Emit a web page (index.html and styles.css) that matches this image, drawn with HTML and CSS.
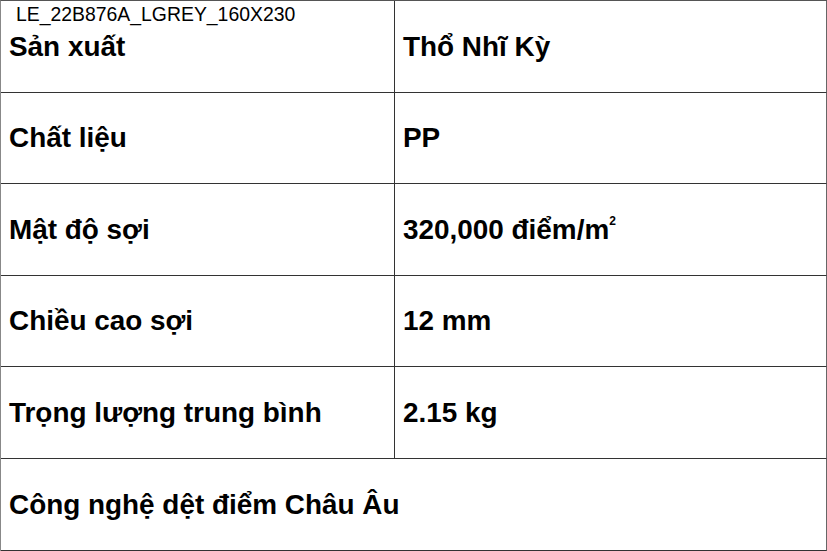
FILE: index.html
```html
<!DOCTYPE html>
<html lang="vi">
<head>
<meta charset="utf-8">
<link rel="stylesheet" href="styles.css">
</head>
<body>
<div class="spec">
  <div class="cell r1 first">
    <span class="code">LE_22B876A_LGREY_160X230</span>
    <span class="txt">Sản xuất</span>
  </div>
  <div class="cell r1 right"><span class="txt">Thổ Nhĩ Kỳ</span></div>
  <div class="cell r2"><span class="txt">Chất liệu</span></div>
  <div class="cell r2 right"><span class="txt">PP</span></div>
  <div class="cell r1"><span class="txt">Mật độ sợi</span></div>
  <div class="cell r1 right"><span class="txt">320,000 điểm/m<sup>2</sup></span></div>
  <div class="cell r2"><span class="txt">Chiều cao sợi</span></div>
  <div class="cell r2 right"><span class="txt">12 mm</span></div>
  <div class="cell r1"><span class="txt">Trọng lượng trung bình</span></div>
  <div class="cell r1 right"><span class="txt">2.15 kg</span></div>
  <div class="cell r1 wide"><span class="txt">Công nghệ dệt điểm Châu Âu</span></div>
</div>
</body>
</html>
```
FILE: styles.css
```css
html, body {
  margin: 0;
  padding: 0;
  background: #fff;
}
.spec {
  width: 827px;
  box-sizing: border-box;
  display: grid;
  grid-template-columns: 394px 432px;
  border-top: 1px solid #555;
  border-left: 1px solid #888;
  font-family: "Liberation Sans", Arial, sans-serif;
  color: #000;
}
.cell {
  position: relative;
  box-sizing: border-box;
  border-right: 1px solid #333;
  border-bottom: 1px solid #333;
  display: flex;
  align-items: center;
  padding: 0 0 0 8px;
}
.r1 { height: 92px; }
.r2 { height: 91px; }
.right { border-right-color: #666; }
.wide { grid-column: 1 / 3; border-right-color: #666; }
.txt {
  font-weight: bold;
  font-size: 27.9px;
  line-height: 30px;
}
.txt sup {
  font-size: 12px;
  vertical-align: 14px;
  line-height: 0;
}
.code {
  position: absolute;
  left: 15px;
  top: 2px;
  font-size: 19.4px;
  line-height: 22px;
}
```
